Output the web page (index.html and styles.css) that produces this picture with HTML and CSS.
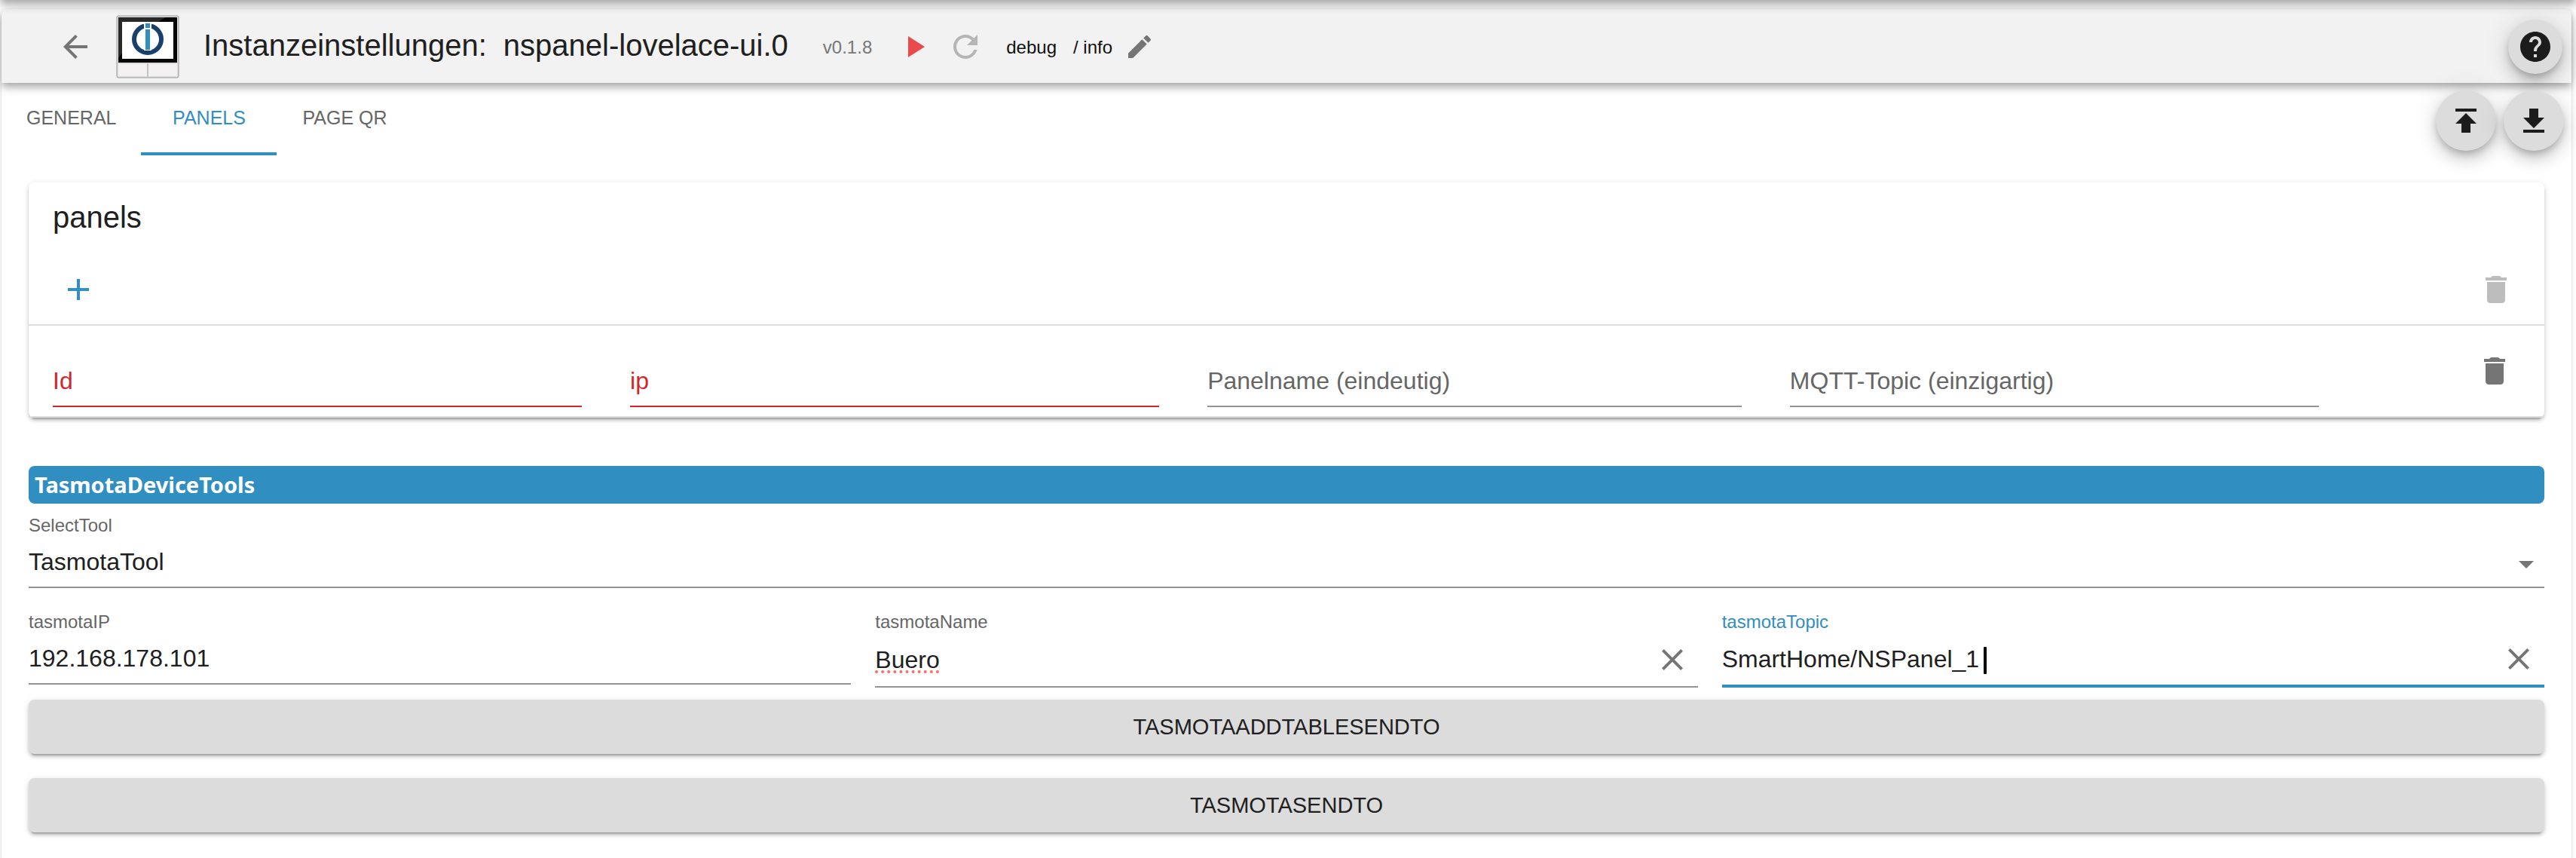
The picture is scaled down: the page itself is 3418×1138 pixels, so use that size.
FILE: index.html
```html
<!DOCTYPE html>
<html lang="de">
<head>
<meta charset="utf-8">
<meta name="viewport" content="width=device-width, initial-scale=1">
<title>Instanzeinstellungen: nspanel-lovelace-ui.0</title>
<link rel="stylesheet" href="styles.css">
</head>
<body>
<div class="app-bar-edge"></div>
<main class="paper">
  <header class="toolbar">
    <button class="icon-button back" type="button" aria-label="Zurück">
      <svg class="icon" viewBox="0 0 24 24"><path d="M20 11H7.83l5.59-5.59L12 4l-8 8 8 8 1.41-1.41L7.83 13H20v-2z"/></svg>
    </button>
    <svg class="logo" viewBox="0 0 84 84" aria-hidden="true">
      <rect x="1" y="1" width="82" height="82" rx="2" fill="#dedede" stroke="#999" stroke-width="1"/>
      <rect x="3" y="3" width="78" height="60" fill="#050505"/>
      <path d="M3 3h63L56 9H9v40l-6 8z" fill="#292929"/>
      <rect x="8" y="9" width="68" height="49" fill="#fff"/>
      <circle cx="42" cy="32" r="18" fill="none" stroke="#183f6d" stroke-width="6"/>
      <rect x="37" y="11" width="10" height="36" fill="#fff"/>
      <rect x="39" y="11" width="6" height="6" fill="#308ec1"/>
      <rect x="39" y="19" width="6" height="27" fill="#308ec1"/>
      <rect x="3" y="65" width="38" height="16" fill="#f3f1f2"/>
      <rect x="43" y="65" width="38" height="16" fill="#f3f1f2"/>
      <rect x="41" y="64" width="2" height="18" fill="#c4c4c4"/>
    </svg>
    <h1 class="title"><span>Instanzeinstellungen:</span><span>nspanel-lovelace-ui.0</span></h1>
    <span class="version">v0.1.8</span>
    <button class="icon-button play" type="button" aria-label="Start">
      <svg class="icon" viewBox="0 0 24 24"><path d="M8 5v14l11-7z"/></svg>
    </button>
    <button class="icon-button refresh" type="button" aria-label="Neustart" disabled>
      <svg class="icon" viewBox="0 0 24 24"><path d="M17.65 6.35C16.2 4.9 14.21 4 12 4c-4.42 0-7.99 3.58-7.99 8s3.57 8 7.99 8c3.73 0 6.84-2.55 7.73-6h-2.08c-.82 2.33-3.04 4-5.65 4-3.31 0-6-2.69-6-6s2.69-6 6-6c1.66 0 3.14.69 4.22 1.78L13 11h7V4l-2.35 2.35z"/></svg>
    </button>
    <div class="log-level"><span>debug</span><span>/ info</span></div>
    <button class="icon-button edit" type="button" aria-label="Bearbeiten">
      <svg class="icon icon-small" viewBox="0 0 24 24"><path d="M3 17.25V21h3.75L17.81 9.94l-3.75-3.75L3 17.25zM20.71 7.04c.39-.39.39-1.02 0-1.41l-2.34-2.34c-.39-.39-1.02-.39-1.41 0l-1.83 1.83 3.75 3.75 1.83-1.83z"/></svg>
    </button>
    <button class="fab fab-help" type="button" aria-label="Hilfe">
      <svg class="icon" viewBox="0 0 24 24"><path d="M12 2C6.48 2 2 6.48 2 12s4.48 10 10 10 10-4.48 10-10S17.52 2 12 2zm1 17h-2v-2h2v2zm2.07-7.75l-.9.92C13.45 12.9 13 13.5 13 15h-2v-.5c0-1.1.45-2.1 1.17-2.83l1.24-1.26c.37-.36.59-.86.59-1.41 0-1.1-.9-2-2-2s-2 .9-2 2H8c0-2.21 1.79-4 4-4s4 1.79 4 4c0 .88-.36 1.68-.93 2.25z"/></svg>
    </button>
  </header>

  <div class="tab-row">
    <div class="tabs" role="tablist">
      <button class="tab" type="button" role="tab" aria-selected="false">GENERAL</button>
      <button class="tab tab-active" type="button" role="tab" aria-selected="true">PANELS</button>
      <button class="tab" type="button" role="tab" aria-selected="false">PAGE QR</button>
    </div>
    <div class="file-actions">
      <button class="fab" type="button" aria-label="Hochladen">
        <svg class="icon" viewBox="0 0 24 24"><path d="M5 4v2h14V4H5zm0 10h4v6h6v-6h4l-7-7-7 7z"/></svg>
      </button>
      <button class="fab" type="button" aria-label="Herunterladen">
        <svg class="icon" viewBox="0 0 24 24"><path d="M5 18v2h14v-2H5zm0-8h4V4h6v6h4l-7 7-7-7z"/></svg>
      </button>
    </div>
  </div>

  <div class="content">
    <section class="card">
      <h2 class="card-title">panels</h2>
      <div class="card-tools">
        <button class="icon-button add" type="button" aria-label="Hinzufügen">
          <svg class="icon" viewBox="0 0 24 24"><path d="M19 13h-6v6h-2v-6H5v-2h6V5h2v6h6v2z"/></svg>
        </button>
        <button class="icon-button delete-all" type="button" aria-label="Alle löschen" disabled>
          <svg class="icon" viewBox="0 0 24 24"><path d="M6 19c0 1.1.9 2 2 2h8c1.1 0 2-.9 2-2V7H6v12zM19 4h-3.5l-1-1h-5l-1 1H5v2h14V4z"/></svg>
        </button>
      </div>
      <table class="panel-table">
        <colgroup><col class="col"><col class="col"><col class="col-name"><col class="col"><col></colgroup>
        <tbody>
          <tr>
            <td><input class="cell-input cell-error" type="text" placeholder="Id" aria-label="Id"></td>
            <td><input class="cell-input cell-error" type="text" placeholder="ip" aria-label="ip"></td>
            <td><input class="cell-input" type="text" placeholder="Panelname (eindeutig)" aria-label="Panelname (eindeutig)"></td>
            <td><input class="cell-input" type="text" placeholder="MQTT-Topic (einzigartig)" aria-label="MQTT-Topic (einzigartig)"></td>
            <td class="cell-action">
              <button class="icon-button" type="button" aria-label="Löschen">
                <svg class="icon" viewBox="0 0 24 24"><path d="M6 19c0 1.1.9 2 2 2h8c1.1 0 2-.9 2-2V7H6v12zM19 4h-3.5l-1-1h-5l-1 1H5v2h14V4z"/></svg>
              </button>
            </td>
          </tr>
        </tbody>
      </table>
    </section>

    <h2 class="section-bar">TasmotaDeviceTools</h2>

    <div class="field">
      <label class="field-label" for="tool">SelectTool</label>
      <div class="field-control select-control">
        <select class="field-input" id="tool"><option>TasmotaTool</option></select>
        <svg class="icon select-arrow" viewBox="0 0 24 24" aria-hidden="true"><path d="M7 10l5 5 5-5z"/></svg>
      </div>
    </div>

    <div class="field-grid">
      <div class="field">
        <label class="field-label" for="ip">tasmotaIP</label>
        <div class="field-control">
          <input class="field-input" id="ip" type="text" value="192.168.178.101">
        </div>
      </div>
      <div class="field">
        <label class="field-label" for="name">tasmotaName</label>
        <div class="field-control clearable">
          <input class="field-input misspelled" id="name" type="text" value="Buero" spellcheck="false">
          <button class="icon-button" type="button" aria-label="Leeren">
            <svg class="icon" viewBox="0 0 24 24"><path d="M19 6.41L17.59 5 12 10.59 6.41 5 5 6.41 10.59 12 5 17.59 6.41 19 12 13.41 17.59 19 19 17.59 13.41 12z"/></svg>
          </button>
        </div>
      </div>
      <div class="field field-focused">
        <label class="field-label" for="topic">tasmotaTopic</label>
        <div class="field-control clearable">
          <input class="field-input" id="topic" type="text" value="SmartHome/NSPanel_1" spellcheck="false">
          <span class="caret"></span>
          <button class="icon-button" type="button" aria-label="Leeren">
            <svg class="icon" viewBox="0 0 24 24"><path d="M19 6.41L17.59 5 12 10.59 6.41 5 5 6.41 10.59 12 5 17.59 6.41 19 12 13.41 17.59 19 19 17.59 13.41 12z"/></svg>
          </button>
        </div>
      </div>
    </div>

    <div class="actions">
      <button class="wide-button" type="button">TASMOTAADDTABLESENDTO</button>
      <button class="wide-button" type="button">TASMOTASENDTO</button>
    </div>
  </div>
</main>
</body>
</html>
```
FILE: styles.css
```css
:root {
  --blue: #308ec1;
  --red: #d0272e;
  --text: #202020;
  --muted: #666;
  --icon: #757575;
  --line: #949494;
  --shadow-2: 0 6px 2px -4px rgba(0, 0, 0, .2), 0 4px 4px 0 rgba(0, 0, 0, .14), 0 2px 10px 0 rgba(0, 0, 0, .12);
  --shadow-4: 0 4px 8px -2px rgba(0, 0, 0, .2), 0 8px 10px 0 rgba(0, 0, 0, .14), 0 2px 20px 0 rgba(0, 0, 0, .12);
  --shadow-6: 0 6px 10px -2px rgba(0, 0, 0, .2), 0 12px 20px 0 rgba(0, 0, 0, .14), 0 2px 36px 0 rgba(0, 0, 0, .12);
}

* {
  box-sizing: border-box;
}

body {
  margin: 0;
  padding: 12px 6px 0 2px;
  min-height: 100vh;
  display: flex;
  overflow-x: hidden;
  background: #fff;
  color: var(--text);
  font-family: "Liberation Sans", Arial, sans-serif;
  font-size: 32px;
}

h1,
h2 {
  margin: 0;
  font-weight: 400;
}

button,
input,
select {
  margin: 0;
  padding: 0;
  border: 0;
  background: none;
  color: inherit;
  font: inherit;
  border-radius: 0;
}

/* Lower shadow of the bar that sits above this view */
.app-bar-edge {
  position: absolute;
  inset: -20px 0 auto;
  height: 20px;
  z-index: 2;
  box-shadow: var(--shadow-4);
}

.paper {
  flex: 1;
  min-width: 0;
  border-radius: 8px 8px 0 0;
  background: #fff;
  box-shadow: 0 4px 2px -2px rgba(0, 0, 0, .2), 0 2px 2px 0 rgba(0, 0, 0, .14), 0 2px 6px 0 rgba(0, 0, 0, .12);
}

.icon {
  display: block;
  width: 48px;
  height: 48px;
  fill: currentColor;
}

.icon-small {
  width: 40px;
  height: 40px;
}

.icon-button {
  flex: none;
  color: var(--icon);
}

.toolbar {
  display: flex;
  align-items: center;
  height: 98px;
  padding: 2px 12px 0 74px;
  border-radius: 8px 8px 0 0;
  background: #f2f2f2;
  box-shadow: var(--shadow-4);
}

.logo {
  width: 84px;
  height: 84px;
  margin: 0 32px 0 30px;
}

.title {
  display: flex;
  gap: 22px;
  font-size: 40px;
  line-height: 64px;
  padding-bottom: 4px;
  white-space: nowrap;
}

.version {
  margin: 0 32px 0 46px;
  padding-top: 2px;
  font-size: 24px;
  color: #777;
}

.play {
  color: #eb4a4a;
}

.refresh {
  margin: 0 30px 0 20px;
  color: #b5b5b5;
}

.log-level {
  display: flex;
  gap: 22px;
  padding-top: 2px;
  font-size: 24px;
  color: #111;
}

.edit {
  margin-left: 16px;
}

.fab {
  display: grid;
  place-items: center;
  flex: none;
  width: 80px;
  height: 80px;
  border-radius: 50%;
  background: #dcdcdc;
  color: #1c1c1c;
  box-shadow: var(--shadow-6);
}

.fab-help {
  width: 72px;
  height: 72px;
  margin-left: auto;
}

.tab-row {
  display: flex;
  justify-content: space-between;
  align-items: flex-start;
  height: 96px;
}

.tabs {
  display: flex;
}

.tab {
  height: 96px;
  min-width: 180px;
  padding: 0 33px;
  border-bottom: 4px solid transparent;
  font-size: 25px;
  color: var(--muted);
}

.tab-active {
  border-bottom-color: var(--blue);
  color: var(--blue);
}

.file-actions {
  display: flex;
  gap: 10px;
  padding: 10px 10px 0 0;
}

.content {
  padding: 36px;
}

.card {
  border-radius: 8px;
  background: #fff;
  box-shadow: var(--shadow-2);
}

.card-title {
  padding: 14px 32px 0;
  font-size: 40px;
  line-height: 64px;
}

.card-tools {
  display: flex;
  justify-content: space-between;
  align-items: center;
  height: 112px;
  padding: 18px 40px 0 42px;
  border-bottom: 2px solid #dcdcdc;
}

.add {
  color: var(--blue);
}

.delete-all {
  color: #bdbdbd;
}

.panel-table {
  width: 100%;
  table-layout: fixed;
  border-collapse: separate;
  border-spacing: 0;
}

.col {
  width: 22.95%;
}

.col-name {
  width: 23.15%;
}

.panel-table td {
  height: 122px;
  padding: 42px 32px 12px;
  border-bottom: 2px solid #dcdcdc;
}

.cell-input {
  display: block;
  width: 100%;
  height: 66px;
  padding-bottom: 2px;
  border-bottom: 2px solid var(--line);
}

.cell-input::placeholder {
  color: var(--muted);
  opacity: 1;
}

.cell-error {
  border-color: var(--red);
}

.cell-error::placeholder {
  color: var(--red);
}

.panel-table .cell-action {
  padding: 0 42px 0 0;
}

.cell-action .icon-button {
  display: block;
  margin-left: auto;
}

.section-bar {
  margin-top: 64px;
  padding: 0 8px;
  border-radius: 8px;
  background: var(--blue);
  color: #fff;
  font: 700 29px/50px "Noto Sans", "Open Sans", sans-serif;
}

.field {
  padding-top: 14px;
}

.field-label {
  display: block;
  font-size: 24px;
  line-height: 30px;
  color: var(--muted);
}

.field-control {
  display: flex;
  align-items: center;
  position: relative;
  height: 68px;
  border-bottom: 2px solid var(--line);
}

.field-input {
  flex: 1;
  min-width: 0;
  height: 60px;
  outline: 0;
}

.select-control .field-input {
  appearance: none;
}

.select-arrow {
  position: absolute;
  right: 0;
  top: 12px;
  color: var(--icon);
  pointer-events: none;
}

.field-grid {
  display: grid;
  grid-template-columns: repeat(3, 1fr);
  align-items: start;
  gap: 32px;
  padding-top: 16px;
}

.clearable {
  height: 72px;
  padding-right: 10px;
}

.misspelled {
  text-decoration: underline dotted #ff6b66 4px;
  text-underline-offset: 4px;
}

.field-focused .field-label {
  color: var(--blue);
}

.field-focused .field-control {
  border-bottom: 4px solid var(--blue);
}

.caret {
  position: absolute;
  left: 347px;
  top: 18px;
  width: 4px;
  height: 36px;
  border-radius: 1px;
  background: #000;
}

.actions {
  display: grid;
  gap: 32px;
  padding-top: 16px;
}

.wide-button {
  height: 72px;
  border-radius: 8px;
  background: #dcdcdc;
  font-size: 29px;
  box-shadow: var(--shadow-2);
}
```
